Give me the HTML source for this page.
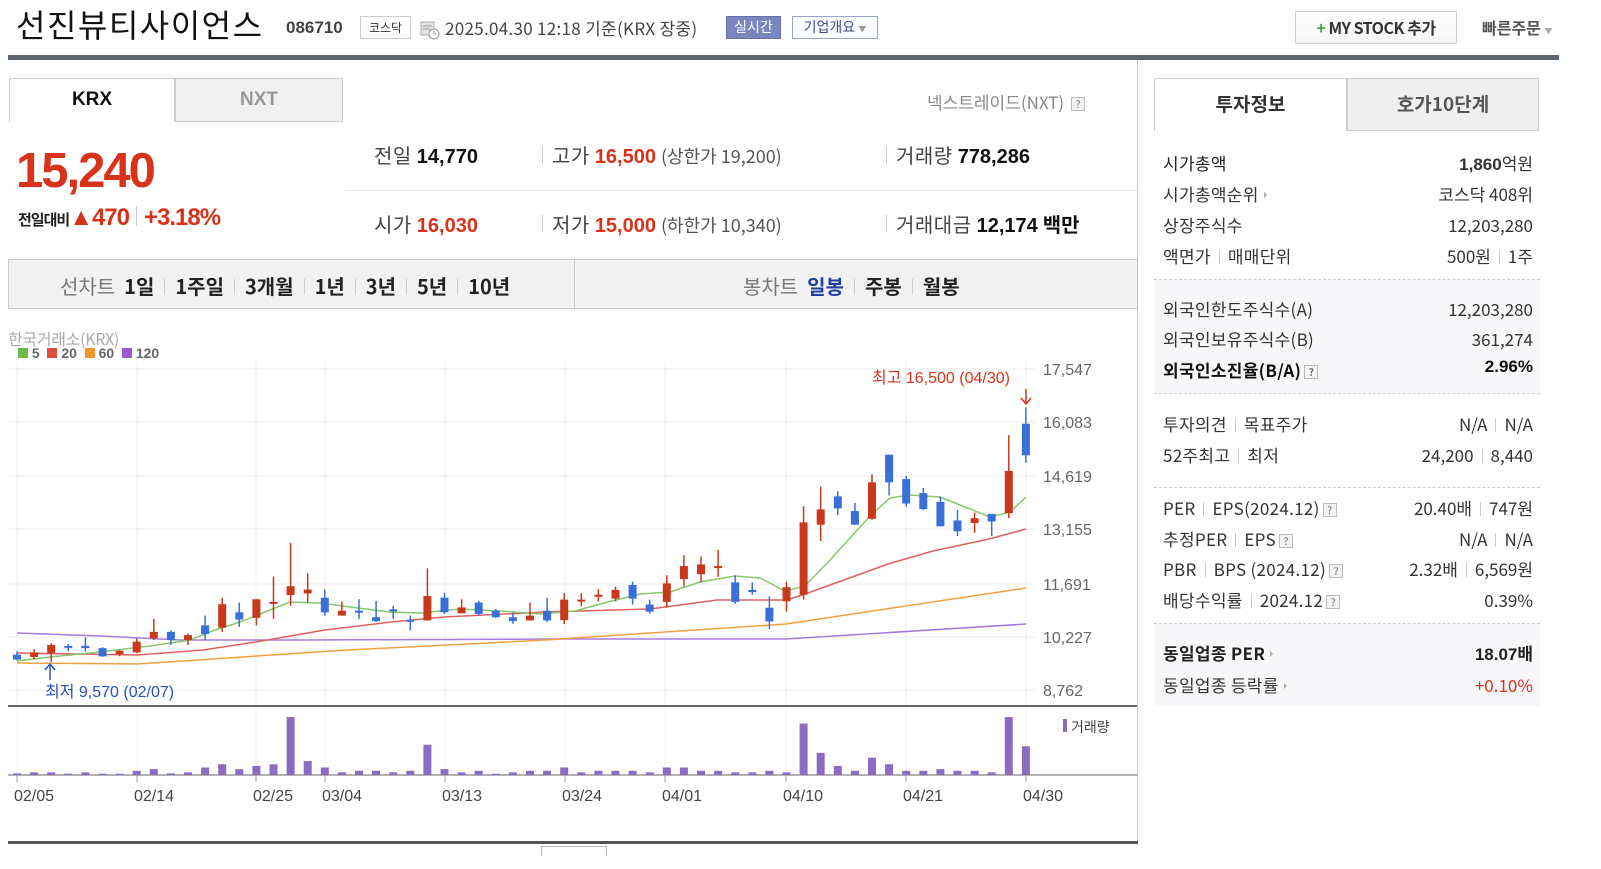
<!DOCTYPE html>
<html><head><meta charset="utf-8">
<style>
*{margin:0;padding:0;box-sizing:border-box}
body{width:1601px;height:869px;background:#fff;font-family:"Liberation Sans","Noto Sans CJK KR",sans-serif;color:#222;position:relative;overflow:hidden}
.a{position:absolute;white-space:nowrap}
.k{font-family:"Noto Sans CJK KR","Liberation Sans",sans-serif}
.sep{display:inline-block;width:1px;height:14px;background:#ccc;margin:0 8px;vertical-align:-1px}
.tb .sep{margin:0 10px;height:16px}
.row{position:absolute;left:1163px;width:370px;font-size:17px;color:#333;letter-spacing:0.3px}
.row .v{position:absolute;right:0;top:0;letter-spacing:0}
.q{display:inline-block;width:14px;height:14px;border:1px solid #bbb;background:#f4f4f4;font-size:10px;line-height:12px;text-align:center;color:#666;vertical-align:1px;margin-left:3px;letter-spacing:0}
.dot{position:absolute;left:1154px;width:386px;border-top:1px dashed #ccc}
.tri{display:inline-block;width:0;height:0;border-left:3px solid #aaa;border-top:3px solid transparent;border-bottom:3px solid transparent;margin-left:5px;vertical-align:3px}
.st{font-size:20px;color:#444;letter-spacing:0.5px}
.st b{font-family:'Liberation Sans';letter-spacing:0}
</style></head><body>

<div class="a k" style="left:16px;top:1px;font-size:32px;color:#111;letter-spacing:1.5px">선진뷰티사이언스</div>
<div class="a" style="left:286px;top:18px;font-size:17px;font-weight:bold;color:#444">086710</div>
<div class="a k" style="left:360px;top:16px;width:51px;height:23px;border:1px solid #ccc;font-size:12px;line-height:21px;text-align:center;color:#333">코스닥</div>
<svg class="a" style="left:420px;top:20px" width="20" height="20"><rect x="1" y="2" width="13" height="13" fill="#e4e4e4" stroke="#aaa"/><line x1="3" y1="6" x2="12" y2="6" stroke="#999"/><line x1="3" y1="9" x2="10" y2="9" stroke="#999"/><circle cx="14" cy="14" r="5" fill="#fff" stroke="#999"/><path d="M14 11v3h2" stroke="#999" fill="none"/></svg>
<div class="a k" style="left:445px;top:15px;font-size:17px;color:#444;letter-spacing:0.3px">2025.04.30 12:18 기준(KRX 장중)</div>
<div class="a k" style="left:726px;top:16px;width:55px;height:23px;background:#7a86bd;border:1px solid #6570a8;color:#fff;font-size:14px;line-height:21px;text-align:center">실시간</div>
<div class="a k" style="left:792px;top:16px;width:86px;height:23px;border:1px solid #9aa3c8;color:#3d4b8c;font-size:14px;line-height:21px;text-align:center;background:#fafbff">기업개요 <span style="font-size:8px;color:#999">▼</span></div>
<div class="a k" style="left:1295px;top:11px;width:162px;height:33px;border:1px solid #ccc;border-radius:2px;background:linear-gradient(#fff,#f5f5f5);font-size:16px;font-weight:bold;line-height:31px;text-align:center;color:#333;letter-spacing:-0.5px"><span style="color:#3aa63a">+</span> MY STOCK 추가</div>
<div class="a k" style="left:1482px;top:15px;font-size:16px;color:#555;font-weight:bold">빠른주문 <span style="font-size:8px;color:#aaa;font-weight:normal">▼</span></div>
<div class="a" style="left:8px;top:55px;width:1551px;height:5px;background:#5e646e"></div>
<div class="a" style="left:1137px;top:60px;width:1px;height:785px;background:#ccc"></div>

<div class="a" style="left:9px;top:78px;width:166px;height:44px;border:1px solid #ccc;border-bottom:none;background:#fff;font-size:19px;font-weight:bold;text-align:center;line-height:42px;color:#111">KRX</div>
<div class="a" style="left:175px;top:78px;width:168px;height:44px;border:1px solid #ccc;background:#f0f0f0;font-size:19px;font-weight:bold;text-align:center;line-height:42px;color:#999">NXT</div>
<div class="a k" style="left:927px;top:89px;font-size:17px;color:#888">넥스트레이드(NXT) <span class="q">?</span></div>

<div class="a" style="left:16px;top:143px;font-size:49px;font-weight:bold;color:#d8321a;letter-spacing:-2px">15,240</div>
<div class="a k" style="left:18px;top:204px;font-size:15px;color:#222;font-weight:bold;letter-spacing:-1px">전일대비<span style="color:#d8321a;font-size:24px;font-family:'Liberation Sans';letter-spacing:-1px">▲470</span><span class="sep" style="height:20px;margin:0 7px"></span><span style="color:#d8321a;font-size:24px;font-family:'Liberation Sans';letter-spacing:-1px">+3.18%</span></div>

<div class="a k st" style="left:374px;top:140px">전일 <b style="color:#111">14,770</b></div>
<div class="a" style="left:542px;top:146px;width:1px;height:17px;background:#ccc"></div>
<div class="a k st" style="left:552px;top:140px">고가 <b style="color:#d8321a">16,500</b> <span style="font-size:18px;color:#555;letter-spacing:0">(상한가 19,200)</span></div>
<div class="a" style="left:886px;top:146px;width:1px;height:17px;background:#ccc"></div>
<div class="a k st" style="left:896px;top:140px">거래량 <b style="color:#111">778,286</b></div>
<div class="a" style="left:345px;top:190px;width:792px;height:1px;background:#e4e4e4"></div>
<div class="a k st" style="left:374px;top:209px">시가 <b style="color:#d8321a">16,030</b></div>
<div class="a" style="left:542px;top:215px;width:1px;height:17px;background:#ccc"></div>
<div class="a k st" style="left:552px;top:209px">저가 <b style="color:#d8321a">15,000</b> <span style="font-size:18px;color:#555;letter-spacing:0">(하한가 10,340)</span></div>
<div class="a" style="left:886px;top:215px;width:1px;height:17px;background:#ccc"></div>
<div class="a k st" style="left:896px;top:209px">거래대금 <b style="color:#111">12,174</b> <b style="color:#111;font-family:'Noto Sans CJK KR'">백만</b></div>

<div class="a" style="left:8px;top:259px;width:1130px;height:50px;background:#f2f2f2;border:1px solid #c8c8c8"></div>
<div class="a" style="left:574px;top:260px;width:1px;height:48px;background:#ccc"></div>
<div class="a k tb" style="left:60px;top:271px;font-size:20px;color:#222;letter-spacing:0"><span style="color:#777">선차트</span> &nbsp;<b>1일</b><span class="sep"></span><b>1주일</b><span class="sep"></span><b>3개월</b><span class="sep"></span><b>1년</b><span class="sep"></span><b>3년</b><span class="sep"></span><b>5년</b><span class="sep"></span><b>10년</b></div>
<div class="a k tb" style="left:743px;top:271px;font-size:20px;color:#222;letter-spacing:0"><span style="color:#777">봉차트</span> &nbsp;<b style="color:#1f3f9e">일봉</b><span class="sep"></span><b>주봉</b><span class="sep"></span><b>월봉</b></div>

<div class="a k" style="left:8px;top:326px;font-size:16px;color:#aaa;letter-spacing:-0.3px">한국거래소(KRX)</div>
<div class="a" style="left:18px;top:345px;font-size:14px;font-weight:bold;color:#666"><span style="display:inline-block;width:10px;height:10px;background:#6cbc47"></span> 5 &nbsp;<span style="display:inline-block;width:10px;height:10px;background:#e04a3a"></span> 20 &nbsp;<span style="display:inline-block;width:10px;height:10px;background:#f0962a"></span> 60 &nbsp;<span style="display:inline-block;width:10px;height:10px;background:#9a5ad0"></span> 120</div>
<svg id="ch" class="a" style="left:0;top:0" width="1140" height="869"></svg>
<div class="a" style="left:8px;top:841px;width:1130px;height:3px;background:#555"></div>
<div class="a" style="left:541px;top:846px;width:66px;height:10px;border:1px solid #bbb;border-bottom:none"></div>

<div class="a k" style="left:1154px;top:78px;width:193px;height:53px;border:1px solid #ccc;border-bottom:none;background:#fff;font-size:19px;font-weight:bold;text-align:center;line-height:50px;color:#333">투자정보</div>
<div class="a k" style="left:1347px;top:78px;width:192px;height:53px;border:1px solid #ccc;background:#efefef;font-size:19px;font-weight:bold;text-align:center;line-height:50px;color:#555">호가10단계</div>
<div class="a" style="left:1154px;top:280px;width:386px;height:113px;background:#f7f7f9"></div>
<div class="a" style="left:1154px;top:624px;width:386px;height:82px;background:#f7f7f9"></div>
<div class="dot" style="top:279px"></div><div class="dot" style="top:393px"></div><div class="dot" style="top:487px"></div><div class="dot" style="top:623px"></div>

<div class="row k" style="top:150px"><span style="color:#222">시가총액</span><span class="v"><b style="font-family:'Liberation Sans'">1,860</b>억원</span></div>
<div class="row k" style="top:181px">시가총액순위<span class="tri"></span><span class="v">코스닥 408위</span></div>
<div class="row k" style="top:212px">상장주식수<span class="v">12,203,280</span></div>
<div class="row k" style="top:243px">액면가<span class="sep"></span>매매단위<span class="v">500원<span class="sep"></span>1주</span></div>
<div class="row k" style="top:296px">외국인한도주식수(A)<span class="v">12,203,280</span></div>
<div class="row k" style="top:326px">외국인보유주식수(B)<span class="v">361,274</span></div>
<div class="row k" style="top:357px;color:#111;font-weight:bold">외국인소진율(B/A)<span class="q">?</span><span class="v" style="font-family:'Liberation Sans'">2.96%</span></div>
<div class="row k" style="top:411px">투자의견<span class="sep"></span>목표주가<span class="v">N/A<span class="sep"></span>N/A</span></div>
<div class="row k" style="top:442px">52주최고<span class="sep"></span>최저<span class="v">24,200<span class="sep"></span>8,440</span></div>
<div class="row k" style="top:495px">PER<span class="sep"></span>EPS(2024.12)<span class="q">?</span><span class="v">20.40배<span class="sep"></span>747원</span></div>
<div class="row k" style="top:526px">추정PER<span class="sep"></span>EPS<span class="q">?</span><span class="v">N/A<span class="sep"></span>N/A</span></div>
<div class="row k" style="top:556px">PBR<span class="sep"></span>BPS (2024.12)<span class="q">?</span><span class="v">2.32배<span class="sep"></span>6,569원</span></div>
<div class="row k" style="top:587px">배당수익률<span class="sep"></span>2024.12<span class="q">?</span><span class="v">0.39%</span></div>
<div class="row k" style="top:640px;color:#222;font-weight:bold">동일업종 PER<span class="tri"></span><span class="v"><span style="font-family:'Liberation Sans'">18.07</span>배</span></div>
<div class="row k" style="top:672px">동일업종 등락률<span class="tri"></span><span class="v" style="color:#d8321a">+0.10%</span></div>

<script>
var s=document.getElementById('ch'),h='';
function L(x1,y1,x2,y2,c,w){h+='<line x1="'+x1+'" y1="'+y1+'" x2="'+x2+'" y2="'+y2+'" stroke="'+c+'" stroke-width="'+(w||1)+'"/>';}
function T(x,y,t,c,sz,a){h+='<text x="'+x+'" y="'+y+'" fill="'+c+'" font-size="'+sz+'" font-family="Liberation Sans,Noto Sans CJK KR,sans-serif"'+(a?' text-anchor="'+a+'"':'')+'>'+t+'</text>';}
var gy=[369,422,476,529,584,637,690],lb=['17,547','16,083','14,619','13,155','11,691','10,227','8,762'];
gy.forEach(function(y,i){L(8,y,1035,y,'#eeeeee');T(1043,y+6,lb[i],'#666',16);});
var vx=[17,137,256,325,445,565,665,786,906,1026];
vx.forEach(function(x){L(x,362,x,706,'#eeeeee');L(x,706,x,775,'#f0f0f0');});
var z2=[['b',1045,1060,1035,1062],['r',1038,1052,1028,1060],['r',1015,1040,1010,1068],['b',1018,1022,1012,1035],['b',1018,1025,992,1035],['b',1025,1050,1022,1052],['r',1033,1043,1030,1050],['r',1005,1038,995,1040],['r',975,995,935,1000],['b',975,1000,970,1015],['r',985,1000,980,1015],['b',955,982,925,1000],['r',890,962,870,975],['b',915,937,885,960],['r',875,932,875,955],['r',883,888,805,935],['r',835,862,702,895],['r',845,857,795,885],['b',870,915,845,925],['r',910,925,882,925],['b',910,915,875,935],['b',930,942,880,945],['b',906,910,895,935],['b',938,942,925,970],['r',865,940,780,940],['b',870,915,855,920],['r',900,918,875,918],['b',885,920,880,925],['b',910,930,905,932],['b',930,942,915,950],['r',925,940,885,940],['b',910,940,870,945]];
var z6=[['r',815,878,795,890],['r',815,820,795,835],['r',800,805,782,820],['r',785,812,775,820],['b',770,812,760,830],['b',830,852,815,858],['r',765,822,740,840],['r',712,752,678,775],['r',707,737,682,762],['r',712,718,662,745],['b',762,822,740,828],['b',785,792,762,800],['b',840,882,805,905],['r',777,820,760,852],['r',578,800,528,815],['r',538,585,468,635],['b',498,535,482,555],['b',543,585,518,585],['r',455,567,430,570],['b',370,455,370,495],['b',445,520,435,530],['b',488,537,472,540],['b',515,590,498,590],['b',572,605,540,620],['r',565,580,548,610],['b',552,575,552,620],['r',420,550,310,565],['b',275,372,225,395]];
function y2(z){return 369+(z-168)/3.07;}function y6(z){return 369+(z-107)/3.07;}
var C=[];z2.forEach(function(c){C.push([c[0],y2(c[1]),y2(c[2]),y2(c[3]),y2(c[4])]);});
z6.forEach(function(c){C.push([c[0],y6(c[1]),y6(c[2]),y6(c[3]),y6(c[4])]);});
function line(p,c){h+='<polyline fill="none" stroke="'+c+'" stroke-width="1.5" points="'+p+'"/>';}
line('17,633 100,636 180,640 300,640 560,639 786,639 1026,624','#a57be0');
line('17,663 137,664 256,656 348,650 545,640 560,639 786,624 1026,588','#f0a040');
line('17,653 137,655 203,650 256,642 325,630 391,622 444,617 545,612 650,609 717,600 787,600 808,593 888,564 933,551 989,539 1026,529','#e06060');
line('17,661 50,657 100,652 150,646 190,640 215,630 240,622 270,610 290,602 320,603 350,607 390,612 420,613 460,609 500,611 540,614 575,611 600,604 640,594 670,592 700,582 735,576 760,578 785,591 805,586 830,560 870,516 890,498 910,495 940,497 960,505 990,517 1010,512 1026,497','#86c86a');
C.forEach(function(c,i){var x=17+i*17.1,col=c[0]=='r'?'#c8381a':'#3a6fd8';L(x,c[3],x,c[4],col,1.5);var t=c[1],b=Math.max(c[2],t+2);h+='<rect x="'+(x-4)+'" y="'+t+'" width="8" height="'+(b-t)+'" fill="'+col+'"/>';});
T(872,383,'최고 16,500 (04/30)','#d8321a',16);
L(1026,389,1026,403,'#d8321a',1.5);h+='<path d="M1021 398 L1026 404 L1031 398" stroke="#d8321a" fill="none" stroke-width="1.5"/>';
L(50,665,50,680,'#2a50c0',1.5);h+='<path d="M45 670 L50 664 L55 670" stroke="#2a50c0" fill="none" stroke-width="1.5"/>';
T(45,697,'최저 9,570 (02/07)','#2a50c0',16);
L(8,706,1137,706,'#666',2);L(8,775,1137,775,'#999',1.5);
var vt=[298,295,295,299,295,299,299,290,285,298,295,280,270,285,275,270,125,260,280,295,290,290,295,290,210,285,295,290,299,295,290,290,280,295,290,290,290,295,280,280,290,290,295,295,290,295,145,235,275,290,250,270,290,290,285,290,290,295,125,215];
vt.forEach(function(t,i){var x=17+i*17.1,hh=(303-t)/3.07;h+='<rect x="'+(x-4)+'" y="'+(775-hh)+'" width="8" height="'+hh+'" fill="#8a6cc0"/>';});
h+='<rect x="1063" y="719" width="4" height="13" fill="#8a6cc0"/>';T(1071,732,'거래량','#444',14);
var dl=['02/05','02/14','02/25','03/04','03/13','03/24','04/01','04/10','04/21','04/30'],dx=[17,137,256,325,445,565,665,786,906,1026];
dl.forEach(function(d,i){L(dx[i],775,dx[i],782,'#999');T(dx[i]-3,801,d,'#444',16);});
s.innerHTML=h;
</script>
</body></html>
